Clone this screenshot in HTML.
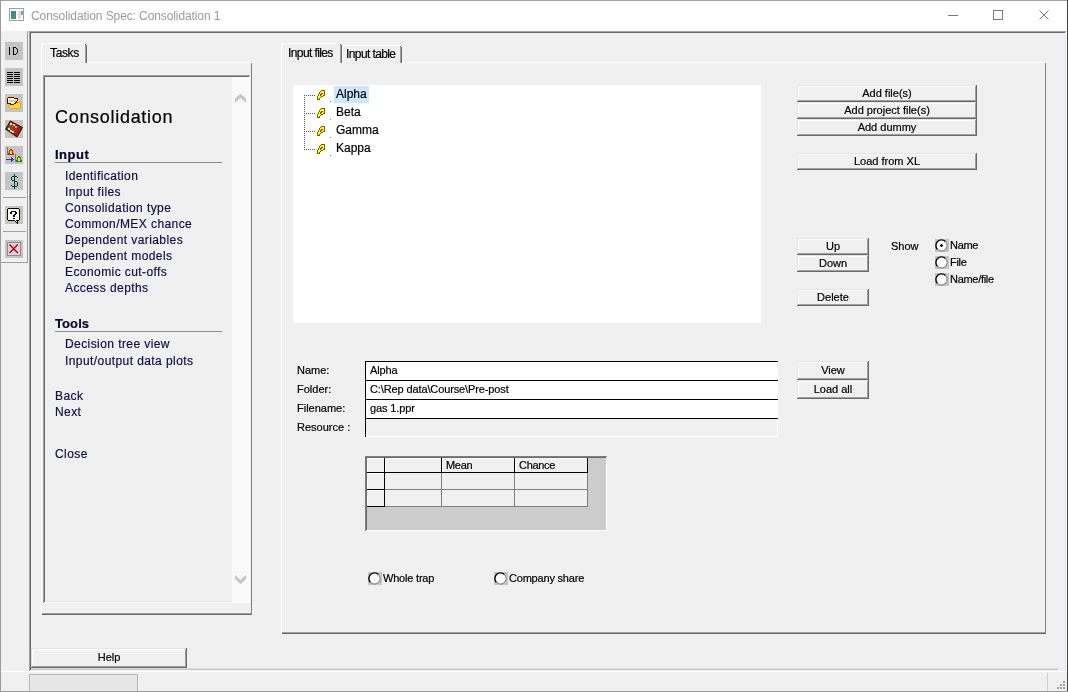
<!DOCTYPE html>
<html><head><meta charset="utf-8"><title>Consolidation Spec</title>
<style>
*{box-sizing:border-box;margin:0;padding:0}
html,body{width:1068px;height:692px;overflow:hidden;background:#f0f0f0}
body{position:relative;font-family:"Liberation Sans",sans-serif;color:#000}
div{position:absolute}
.a{position:absolute}
.t{white-space:pre;will-change:transform;-webkit-text-stroke:0.2px currentColor}
</style></head><body>
<div style="left:0px;top:0px;width:1068px;height:692px;background:#f0f0f0;"></div>
<div style="left:0px;top:0px;width:1068px;height:31px;background:#fff;"></div>
<div style="left:0px;top:0px;width:1068px;height:1px;background:#a3a3a3;"></div>
<div style="left:0px;top:0px;width:1px;height:692px;background:#9c9c9c;"></div>
<div style="left:1067px;top:0px;width:1px;height:692px;background:#3f4452;"></div>
<div style="left:0px;top:691px;width:1068px;height:1px;background:#9c9c9c;"></div>
<div style="left:9px;top:8px;width:15px;height:13px;background:#fff;border:1px solid #a0a0a0;"></div>
<div style="left:11px;top:11px;width:5px;height:8px;background:linear-gradient(160deg,#4a7a9a,#3c9a70);"></div>
<div style="left:18px;top:11px;width:3px;height:8px;background:#dcdcdc;"></div>
<div style="left:21px;top:11px;width:2px;height:4px;background:#7aa8a0;"></div>
<div class="t" style="left:31px;top:9.84px;font-size:12px;line-height:12px;color:#9a9a9a;letter-spacing:-0.1px;-webkit-text-stroke:0;">Consolidation Spec: Consolidation 1</div>
<div style="left:948px;top:15px;width:10px;height:1px;background:#7a7a7a;"></div>
<div style="left:993px;top:10px;width:10px;height:10px;border:1px solid #7a7a7a;"></div>
<svg class="a" style="left:1039px;top:10px" width="10" height="10"><path d="M0.5 0.5L9.5 9.5M9.5 0.5L0.5 9.5" stroke="#7a7a7a" stroke-width="1"/></svg>
<div style="left:27px;top:31px;width:1px;height:232px;background:#a0a0a0;"></div>
<div style="left:1px;top:262px;width:27px;height:1px;background:#a0a0a0;"></div>
<div style="left:5px;top:42px;width:18px;height:18px;background:#c4c4c4;"></div>
<div style="left:5px;top:68px;width:18px;height:18px;background:#c4c4c4;"></div>
<div style="left:5px;top:94px;width:18px;height:18px;background:#c4c4c4;"></div>
<div style="left:5px;top:120px;width:18px;height:18px;background:#c4c4c4;"></div>
<div style="left:5px;top:146px;width:18px;height:18px;background:#c4c4c4;"></div>
<div style="left:5px;top:172px;width:18px;height:18px;background:#c4c4c4;"></div>
<div style="left:3px;top:197px;width:23px;height:1px;background:#a0a0a0;"></div>
<div style="left:5px;top:206px;width:18px;height:18px;background:#c4c4c4;"></div>
<div style="left:3px;top:231px;width:23px;height:1px;background:#a0a0a0;"></div>
<div style="left:5px;top:240px;width:18px;height:18px;background:#c4c4c4;"></div>
<svg class="a" style="left:5px;top:42px" width="18" height="18" viewBox="0 0 18 18" shape-rendering="crispEdges"><rect x="4" y="5" width="1" height="1" fill="#000"/><rect x="8" y="5" width="1" height="1" fill="#000"/><rect x="9" y="5" width="1" height="1" fill="#000"/><rect x="10" y="5" width="1" height="1" fill="#000"/><rect x="4" y="6" width="1" height="1" fill="#000"/><rect x="8" y="6" width="1" height="1" fill="#000"/><rect x="11" y="6" width="1" height="1" fill="#000"/><rect x="4" y="7" width="1" height="1" fill="#000"/><rect x="8" y="7" width="1" height="1" fill="#000"/><rect x="12" y="7" width="1" height="1" fill="#000"/><rect x="4" y="8" width="1" height="1" fill="#000"/><rect x="8" y="8" width="1" height="1" fill="#000"/><rect x="12" y="8" width="1" height="1" fill="#000"/><rect x="4" y="9" width="1" height="1" fill="#000"/><rect x="8" y="9" width="1" height="1" fill="#000"/><rect x="12" y="9" width="1" height="1" fill="#000"/><rect x="4" y="10" width="1" height="1" fill="#000"/><rect x="8" y="10" width="1" height="1" fill="#000"/><rect x="12" y="10" width="1" height="1" fill="#000"/><rect x="4" y="11" width="1" height="1" fill="#000"/><rect x="8" y="11" width="1" height="1" fill="#000"/><rect x="11" y="11" width="1" height="1" fill="#000"/><rect x="4" y="12" width="1" height="1" fill="#000"/><rect x="8" y="12" width="1" height="1" fill="#000"/><rect x="9" y="12" width="1" height="1" fill="#000"/><rect x="10" y="12" width="1" height="1" fill="#000"/></svg>
<svg class="a" style="left:5px;top:68px" width="18" height="18" viewBox="0 0 18 18" shape-rendering="crispEdges"><rect x="2" y="4" width="6" height="1" fill="#000"/><rect x="9" y="4" width="6" height="1" fill="#000"/><rect x="2" y="6" width="6" height="1" fill="#000"/><rect x="9" y="6" width="6" height="1" fill="#000"/><rect x="2" y="8" width="6" height="1" fill="#000"/><rect x="9" y="8" width="6" height="1" fill="#000"/><rect x="2" y="10" width="6" height="1" fill="#000"/><rect x="9" y="10" width="6" height="1" fill="#000"/><rect x="2" y="12" width="6" height="1" fill="#000"/><rect x="9" y="12" width="6" height="1" fill="#000"/><rect x="2" y="14" width="6" height="1" fill="#000"/><rect x="9" y="14" width="6" height="1" fill="#000"/></svg>
<svg class="a" style="left:5px;top:94px" width="18" height="18" viewBox="0 0 18 18" shape-rendering="crispEdges"><rect x="3" y="3" width="1" height="1" fill="#6a0000"/><rect x="4" y="3" width="1" height="1" fill="#6a0000"/><rect x="5" y="3" width="1" height="1" fill="#6a0000"/><rect x="6" y="3" width="1" height="1" fill="#6a0000"/><rect x="7" y="3" width="1" height="1" fill="#6a0000"/><rect x="8" y="3" width="1" height="1" fill="#6a0000"/><rect x="2" y="4" width="1" height="1" fill="#6a0000"/><rect x="3" y="4" width="1" height="1" fill="#fff0d0"/><rect x="4" y="4" width="1" height="1" fill="#fff0d0"/><rect x="5" y="4" width="1" height="1" fill="#fff0d0"/><rect x="6" y="4" width="1" height="1" fill="#fff0d0"/><rect x="7" y="4" width="1" height="1" fill="#fff0d0"/><rect x="8" y="4" width="1" height="1" fill="#fff0d0"/><rect x="9" y="4" width="1" height="1" fill="#6a0000"/><rect x="10" y="4" width="1" height="1" fill="#6a0000"/><rect x="11" y="4" width="1" height="1" fill="#6a0000"/><rect x="12" y="4" width="1" height="1" fill="#6a0000"/><rect x="2" y="5" width="1" height="1" fill="#6a0000"/><rect x="3" y="5" width="1" height="1" fill="#fff0d0"/><rect x="4" y="5" width="1" height="1" fill="#fff0d0"/><rect x="5" y="5" width="1" height="1" fill="#fff0d0"/><rect x="6" y="5" width="1" height="1" fill="#fff0d0"/><rect x="7" y="5" width="1" height="1" fill="#fff0d0"/><rect x="8" y="5" width="1" height="1" fill="#fff0d0"/><rect x="9" y="5" width="1" height="1" fill="#fff0d0"/><rect x="10" y="5" width="1" height="1" fill="#fff0d0"/><rect x="11" y="5" width="1" height="1" fill="#fff0d0"/><rect x="12" y="5" width="1" height="1" fill="#6a0000"/><rect x="2" y="6" width="1" height="1" fill="#6a0000"/><rect x="3" y="6" width="1" height="1" fill="#fff0d0"/><rect x="4" y="6" width="1" height="1" fill="#c0dc90"/><rect x="5" y="6" width="1" height="1" fill="#c0dc90"/><rect x="6" y="6" width="1" height="1" fill="#c0dc90"/><rect x="7" y="6" width="1" height="1" fill="#c0dc90"/><rect x="8" y="6" width="1" height="1" fill="#c0dc90"/><rect x="9" y="6" width="1" height="1" fill="#c0dc90"/><rect x="10" y="6" width="1" height="1" fill="#c0dc90"/><rect x="11" y="6" width="1" height="1" fill="#fff0d0"/><rect x="12" y="6" width="1" height="1" fill="#6a0000"/><rect x="2" y="7" width="1" height="1" fill="#6a0000"/><rect x="3" y="7" width="1" height="1" fill="#fff0d0"/><rect x="4" y="7" width="1" height="1" fill="#c0dc90"/><rect x="5" y="7" width="1" height="1" fill="#c0dc90"/><rect x="6" y="7" width="1" height="1" fill="#c0dc90"/><rect x="7" y="7" width="1" height="1" fill="#c0dc90"/><rect x="8" y="7" width="1" height="1" fill="#c0dc90"/><rect x="9" y="7" width="1" height="1" fill="#c0dc90"/><rect x="10" y="7" width="1" height="1" fill="#c0dc90"/><rect x="11" y="7" width="1" height="1" fill="#6a0000"/><rect x="2" y="8" width="1" height="1" fill="#6a0000"/><rect x="3" y="8" width="1" height="1" fill="#fff0d0"/><rect x="4" y="8" width="1" height="1" fill="#fff0d0"/><rect x="5" y="8" width="1" height="1" fill="#fff0d0"/><rect x="6" y="8" width="1" height="1" fill="#fff0d0"/><rect x="7" y="8" width="1" height="1" fill="#fff0d0"/><rect x="8" y="8" width="1" height="1" fill="#fff0d0"/><rect x="9" y="8" width="1" height="1" fill="#fff0d0"/><rect x="10" y="8" width="1" height="1" fill="#6a0000"/><rect x="11" y="8" width="1" height="1" fill="#6a0000"/><rect x="12" y="8" width="1" height="1" fill="#f0a030"/><rect x="13" y="8" width="1" height="1" fill="#f0a030"/><rect x="14" y="8" width="1" height="1" fill="#f0a030"/><rect x="15" y="8" width="1" height="1" fill="#f0a030"/><rect x="2" y="9" width="1" height="1" fill="#6a0000"/><rect x="3" y="9" width="1" height="1" fill="#6a0000"/><rect x="4" y="9" width="1" height="1" fill="#6a0000"/><rect x="5" y="9" width="1" height="1" fill="#6a0000"/><rect x="6" y="9" width="1" height="1" fill="#fff0d0"/><rect x="7" y="9" width="1" height="1" fill="#fff0d0"/><rect x="8" y="9" width="1" height="1" fill="#fff0d0"/><rect x="9" y="9" width="1" height="1" fill="#6a0000"/><rect x="10" y="9" width="1" height="1" fill="#6a0000"/><rect x="11" y="9" width="1" height="1" fill="#ffe400"/><rect x="12" y="9" width="1" height="1" fill="#ffe400"/><rect x="13" y="9" width="1" height="1" fill="#ffe400"/><rect x="14" y="9" width="1" height="1" fill="#ffe400"/><rect x="15" y="9" width="1" height="1" fill="#f0a030"/><rect x="5" y="10" width="1" height="1" fill="#6a0000"/><rect x="6" y="10" width="1" height="1" fill="#6a0000"/><rect x="7" y="10" width="1" height="1" fill="#6a0000"/><rect x="8" y="10" width="1" height="1" fill="#6a0000"/><rect x="9" y="10" width="1" height="1" fill="#ffe400"/><rect x="10" y="10" width="1" height="1" fill="#ffe400"/><rect x="11" y="10" width="1" height="1" fill="#ffe400"/><rect x="12" y="10" width="1" height="1" fill="#ffe400"/><rect x="13" y="10" width="1" height="1" fill="#ffe400"/><rect x="14" y="10" width="1" height="1" fill="#ffe400"/><rect x="15" y="10" width="1" height="1" fill="#f0a030"/><rect x="3" y="11" width="1" height="1" fill="#f0a030"/><rect x="4" y="11" width="1" height="1" fill="#f0a030"/><rect x="5" y="11" width="1" height="1" fill="#ffe400"/><rect x="6" y="11" width="1" height="1" fill="#ffe400"/><rect x="7" y="11" width="1" height="1" fill="#ffe400"/><rect x="8" y="11" width="1" height="1" fill="#ffe400"/><rect x="9" y="11" width="1" height="1" fill="#ffe400"/><rect x="10" y="11" width="1" height="1" fill="#ffe400"/><rect x="11" y="11" width="1" height="1" fill="#ffe400"/><rect x="12" y="11" width="1" height="1" fill="#ffe400"/><rect x="13" y="11" width="1" height="1" fill="#ffe400"/><rect x="14" y="11" width="1" height="1" fill="#ffe400"/><rect x="15" y="11" width="1" height="1" fill="#f0a030"/><rect x="3" y="12" width="1" height="1" fill="#f0a030"/><rect x="4" y="12" width="1" height="1" fill="#ffe400"/><rect x="5" y="12" width="1" height="1" fill="#ffe400"/><rect x="6" y="12" width="1" height="1" fill="#ffe400"/><rect x="7" y="12" width="1" height="1" fill="#ffe400"/><rect x="8" y="12" width="1" height="1" fill="#ffe400"/><rect x="9" y="12" width="1" height="1" fill="#ffe400"/><rect x="10" y="12" width="1" height="1" fill="#ffe400"/><rect x="11" y="12" width="1" height="1" fill="#ffe400"/><rect x="12" y="12" width="1" height="1" fill="#ffe400"/><rect x="13" y="12" width="1" height="1" fill="#ffe400"/><rect x="14" y="12" width="1" height="1" fill="#ffe400"/><rect x="15" y="12" width="1" height="1" fill="#f0a030"/><rect x="4" y="13" width="1" height="1" fill="#f0a030"/><rect x="5" y="13" width="1" height="1" fill="#ffe400"/><rect x="6" y="13" width="1" height="1" fill="#ffe400"/><rect x="7" y="13" width="1" height="1" fill="#ffe400"/><rect x="8" y="13" width="1" height="1" fill="#ffe400"/><rect x="9" y="13" width="1" height="1" fill="#ffe400"/><rect x="10" y="13" width="1" height="1" fill="#ffe400"/><rect x="11" y="13" width="1" height="1" fill="#ffe400"/><rect x="12" y="13" width="1" height="1" fill="#ffe400"/><rect x="13" y="13" width="1" height="1" fill="#ffe400"/><rect x="14" y="13" width="1" height="1" fill="#ffe400"/><rect x="15" y="13" width="1" height="1" fill="#f0a030"/><rect x="5" y="14" width="1" height="1" fill="#f0a030"/><rect x="6" y="14" width="1" height="1" fill="#f0a030"/><rect x="7" y="14" width="1" height="1" fill="#f0a030"/><rect x="8" y="14" width="1" height="1" fill="#f0a030"/><rect x="9" y="14" width="1" height="1" fill="#f0a030"/><rect x="10" y="14" width="1" height="1" fill="#f0a030"/><rect x="11" y="14" width="1" height="1" fill="#f0a030"/><rect x="12" y="14" width="1" height="1" fill="#f0a030"/><rect x="13" y="14" width="1" height="1" fill="#f0a030"/><rect x="14" y="14" width="1" height="1" fill="#f0a030"/></svg>
<svg class="a" style="left:5px;top:120px" width="18" height="18" viewBox="0 0 18 18" shape-rendering="crispEdges"><defs><linearGradient id="gf" x1="0" y1="0" x2="1" y2="0"><stop offset="0" stop-color="#2a8a20"/><stop offset="0.45" stop-color="#b03010"/><stop offset="1" stop-color="#b00c08"/></linearGradient></defs><polygon points="0.8,9 5.5,1.2 17.2,7.5 12,16.8" fill="url(#gf)" stroke="#3a1808" stroke-width="1.3" stroke-linejoin="round" shape-rendering="geometricPrecision"/><g fill="#f4d8c0"><rect x="5" y="3" width="2" height="2"/><rect x="7.5" y="4" width="2" height="2"/><rect x="2.5" y="8" width="2" height="2" fill="#c8e8b0"/><rect x="4.5" y="9.5" width="2" height="2"/><rect x="7" y="11" width="2" height="2"/></g><rect x="10" y="5.5" width="2" height="2" fill="#ff9090"/></svg>
<svg class="a" style="left:5px;top:146px" width="18" height="18" viewBox="0 0 18 18" shape-rendering="crispEdges"><rect x="2" y="1" width="1" height="1" fill="#7a7a7a"/><rect x="2" y="2" width="1" height="1" fill="#7a7a7a"/><rect x="2" y="3" width="1" height="1" fill="#7a7a7a"/><rect x="5" y="3" width="1" height="1" fill="#c02800"/><rect x="6" y="3" width="1" height="1" fill="#c02800"/><rect x="2" y="4" width="1" height="1" fill="#7a7a7a"/><rect x="4" y="4" width="1" height="1" fill="#c02800"/><rect x="5" y="4" width="1" height="1" fill="#e86000"/><rect x="6" y="4" width="1" height="1" fill="#e86000"/><rect x="7" y="4" width="1" height="1" fill="#c02800"/><rect x="2" y="5" width="1" height="1" fill="#7a7a7a"/><rect x="3" y="5" width="1" height="1" fill="#ff9898"/><rect x="4" y="5" width="1" height="1" fill="#c02800"/><rect x="5" y="5" width="1" height="1" fill="#fff030"/><rect x="6" y="5" width="1" height="1" fill="#fff030"/><rect x="7" y="5" width="1" height="1" fill="#c02800"/><rect x="8" y="5" width="1" height="1" fill="#ff9898"/><rect x="2" y="6" width="1" height="1" fill="#7a7a7a"/><rect x="3" y="6" width="1" height="1" fill="#ff9898"/><rect x="4" y="6" width="1" height="1" fill="#c02800"/><rect x="5" y="6" width="1" height="1" fill="#fff030"/><rect x="6" y="6" width="1" height="1" fill="#fff030"/><rect x="7" y="6" width="1" height="1" fill="#c02800"/><rect x="8" y="6" width="1" height="1" fill="#ff9898"/><rect x="2" y="7" width="1" height="1" fill="#7a7a7a"/><rect x="3" y="7" width="1" height="1" fill="#c02800"/><rect x="4" y="7" width="1" height="1" fill="#c02800"/><rect x="5" y="7" width="1" height="1" fill="#fff030"/><rect x="6" y="7" width="1" height="1" fill="#fff030"/><rect x="7" y="7" width="1" height="1" fill="#c02800"/><rect x="8" y="7" width="1" height="1" fill="#c02800"/><rect x="2" y="8" width="1" height="1" fill="#7a7a7a"/><rect x="3" y="8" width="1" height="1" fill="#c02800"/><rect x="4" y="8" width="1" height="1" fill="#c02800"/><rect x="5" y="8" width="1" height="1" fill="#c02800"/><rect x="6" y="8" width="1" height="1" fill="#c02800"/><rect x="7" y="8" width="1" height="1" fill="#c02800"/><rect x="8" y="8" width="1" height="1" fill="#c02800"/><rect x="10" y="8" width="1" height="1" fill="#7a7a7a"/><rect x="10" y="9" width="1" height="1" fill="#7a7a7a"/><rect x="10" y="10" width="1" height="1" fill="#7a7a7a"/><rect x="13" y="10" width="1" height="1" fill="#1a8a1a"/><rect x="14" y="10" width="1" height="1" fill="#1a8a1a"/><rect x="6" y="11" width="1" height="1" fill="#3040b0"/><rect x="10" y="11" width="1" height="1" fill="#7a7a7a"/><rect x="12" y="11" width="1" height="1" fill="#1a8a1a"/><rect x="13" y="11" width="1" height="1" fill="#e86000"/><rect x="14" y="11" width="1" height="1" fill="#e86000"/><rect x="15" y="11" width="1" height="1" fill="#1a8a1a"/><rect x="6" y="12" width="1" height="1" fill="#3040b0"/><rect x="7" y="12" width="1" height="1" fill="#3040b0"/><rect x="10" y="12" width="1" height="1" fill="#7a7a7a"/><rect x="11" y="12" width="1" height="1" fill="#90e090"/><rect x="12" y="12" width="1" height="1" fill="#1a8a1a"/><rect x="13" y="12" width="1" height="1" fill="#fff030"/><rect x="14" y="12" width="1" height="1" fill="#fff030"/><rect x="15" y="12" width="1" height="1" fill="#1a8a1a"/><rect x="16" y="12" width="1" height="1" fill="#90e090"/><rect x="1" y="13" width="1" height="1" fill="#3040b0"/><rect x="2" y="13" width="1" height="1" fill="#3040b0"/><rect x="3" y="13" width="1" height="1" fill="#3040b0"/><rect x="4" y="13" width="1" height="1" fill="#3040b0"/><rect x="5" y="13" width="1" height="1" fill="#3040b0"/><rect x="6" y="13" width="1" height="1" fill="#3040b0"/><rect x="7" y="13" width="1" height="1" fill="#3040b0"/><rect x="8" y="13" width="1" height="1" fill="#3040b0"/><rect x="10" y="13" width="1" height="1" fill="#7a7a7a"/><rect x="11" y="13" width="1" height="1" fill="#90e090"/><rect x="12" y="13" width="1" height="1" fill="#1a8a1a"/><rect x="13" y="13" width="1" height="1" fill="#fff030"/><rect x="14" y="13" width="1" height="1" fill="#fff030"/><rect x="15" y="13" width="1" height="1" fill="#1a8a1a"/><rect x="16" y="13" width="1" height="1" fill="#90e090"/><rect x="6" y="14" width="1" height="1" fill="#3040b0"/><rect x="7" y="14" width="1" height="1" fill="#3040b0"/><rect x="10" y="14" width="1" height="1" fill="#7a7a7a"/><rect x="11" y="14" width="1" height="1" fill="#1a8a1a"/><rect x="12" y="14" width="1" height="1" fill="#1a8a1a"/><rect x="13" y="14" width="1" height="1" fill="#fff030"/><rect x="14" y="14" width="1" height="1" fill="#fff030"/><rect x="15" y="14" width="1" height="1" fill="#1a8a1a"/><rect x="16" y="14" width="1" height="1" fill="#1a8a1a"/><rect x="6" y="15" width="1" height="1" fill="#3040b0"/><rect x="10" y="15" width="1" height="1" fill="#7a7a7a"/><rect x="11" y="15" width="1" height="1" fill="#1a8a1a"/><rect x="12" y="15" width="1" height="1" fill="#1a8a1a"/><rect x="13" y="15" width="1" height="1" fill="#1a8a1a"/><rect x="14" y="15" width="1" height="1" fill="#1a8a1a"/><rect x="15" y="15" width="1" height="1" fill="#1a8a1a"/><rect x="16" y="15" width="1" height="1" fill="#1a8a1a"/></svg>
<svg class="a" style="left:5px;top:172px" width="18" height="18" viewBox="0 0 18 18" shape-rendering="crispEdges"><rect x="9" y="2" width="1" height="1" fill="#003c3c"/><rect x="9" y="3" width="1" height="1" fill="#003c3c"/><rect x="7" y="4" width="1" height="1" fill="#003c3c"/><rect x="8" y="4" width="1" height="1" fill="#003c3c"/><rect x="9" y="4" width="1" height="1" fill="#003c3c"/><rect x="10" y="4" width="1" height="1" fill="#003c3c"/><rect x="11" y="4" width="1" height="1" fill="#003c3c"/><rect x="6" y="5" width="1" height="1" fill="#003c3c"/><rect x="9" y="5" width="1" height="1" fill="#003c3c"/><rect x="12" y="5" width="1" height="1" fill="#003c3c"/><rect x="6" y="6" width="1" height="1" fill="#003c3c"/><rect x="9" y="6" width="1" height="1" fill="#003c3c"/><rect x="6" y="7" width="1" height="1" fill="#003c3c"/><rect x="9" y="7" width="1" height="1" fill="#003c3c"/><rect x="7" y="8" width="1" height="1" fill="#003c3c"/><rect x="8" y="8" width="1" height="1" fill="#003c3c"/><rect x="9" y="8" width="1" height="1" fill="#003c3c"/><rect x="9" y="9" width="1" height="1" fill="#003c3c"/><rect x="10" y="9" width="1" height="1" fill="#003c3c"/><rect x="11" y="9" width="1" height="1" fill="#003c3c"/><rect x="9" y="10" width="1" height="1" fill="#003c3c"/><rect x="12" y="10" width="1" height="1" fill="#003c3c"/><rect x="9" y="11" width="1" height="1" fill="#003c3c"/><rect x="12" y="11" width="1" height="1" fill="#003c3c"/><rect x="9" y="12" width="1" height="1" fill="#003c3c"/><rect x="12" y="12" width="1" height="1" fill="#003c3c"/><rect x="6" y="13" width="1" height="1" fill="#003c3c"/><rect x="9" y="13" width="1" height="1" fill="#003c3c"/><rect x="12" y="13" width="1" height="1" fill="#003c3c"/><rect x="7" y="14" width="1" height="1" fill="#003c3c"/><rect x="8" y="14" width="1" height="1" fill="#003c3c"/><rect x="9" y="14" width="1" height="1" fill="#003c3c"/><rect x="10" y="14" width="1" height="1" fill="#003c3c"/><rect x="11" y="14" width="1" height="1" fill="#003c3c"/><rect x="9" y="15" width="1" height="1" fill="#003c3c"/><rect x="9" y="16" width="1" height="1" fill="#003c3c"/></svg>
<svg class="a" style="left:5px;top:206px" width="18" height="18" viewBox="0 0 18 18" shape-rendering="crispEdges"><rect x="3" y="2" width="1" height="1" fill="#000"/><rect x="4" y="2" width="1" height="1" fill="#000"/><rect x="5" y="2" width="1" height="1" fill="#000"/><rect x="6" y="2" width="1" height="1" fill="#000"/><rect x="7" y="2" width="1" height="1" fill="#000"/><rect x="8" y="2" width="1" height="1" fill="#000"/><rect x="9" y="2" width="1" height="1" fill="#000"/><rect x="10" y="2" width="1" height="1" fill="#000"/><rect x="11" y="2" width="1" height="1" fill="#000"/><rect x="12" y="2" width="1" height="1" fill="#000"/><rect x="13" y="2" width="1" height="1" fill="#000"/><rect x="2" y="3" width="1" height="1" fill="#000"/><rect x="3" y="3" width="1" height="1" fill="#ffffe0"/><rect x="4" y="3" width="1" height="1" fill="#ffffe0"/><rect x="5" y="3" width="1" height="1" fill="#ffffe0"/><rect x="6" y="3" width="1" height="1" fill="#ffffe0"/><rect x="7" y="3" width="1" height="1" fill="#ffffe0"/><rect x="8" y="3" width="1" height="1" fill="#ffffe0"/><rect x="9" y="3" width="1" height="1" fill="#ffffe0"/><rect x="10" y="3" width="1" height="1" fill="#ffffe0"/><rect x="11" y="3" width="1" height="1" fill="#ffffe0"/><rect x="12" y="3" width="1" height="1" fill="#ffffe0"/><rect x="13" y="3" width="1" height="1" fill="#ffffe0"/><rect x="14" y="3" width="1" height="1" fill="#000"/><rect x="2" y="4" width="1" height="1" fill="#000"/><rect x="3" y="4" width="1" height="1" fill="#ffffe0"/><rect x="4" y="4" width="1" height="1" fill="#ffffe0"/><rect x="5" y="4" width="1" height="1" fill="#ffffe0"/><rect x="6" y="4" width="1" height="1" fill="#ffffe0"/><rect x="7" y="4" width="1" height="1" fill="#ffffe0"/><rect x="8" y="4" width="1" height="1" fill="#ffffe0"/><rect x="9" y="4" width="1" height="1" fill="#ffffe0"/><rect x="10" y="4" width="1" height="1" fill="#ffffe0"/><rect x="11" y="4" width="1" height="1" fill="#ffffe0"/><rect x="12" y="4" width="1" height="1" fill="#ffffe0"/><rect x="13" y="4" width="1" height="1" fill="#ffffe0"/><rect x="14" y="4" width="1" height="1" fill="#000"/><rect x="2" y="5" width="1" height="1" fill="#000"/><rect x="3" y="5" width="1" height="1" fill="#ffffe0"/><rect x="4" y="5" width="1" height="1" fill="#ffffe0"/><rect x="5" y="5" width="1" height="1" fill="#ffffe0"/><rect x="6" y="5" width="1" height="1" fill="#000050"/><rect x="7" y="5" width="1" height="1" fill="#000050"/><rect x="8" y="5" width="1" height="1" fill="#000050"/><rect x="9" y="5" width="1" height="1" fill="#000050"/><rect x="10" y="5" width="1" height="1" fill="#000050"/><rect x="11" y="5" width="1" height="1" fill="#ffffe0"/><rect x="12" y="5" width="1" height="1" fill="#ffffe0"/><rect x="13" y="5" width="1" height="1" fill="#ffffe0"/><rect x="14" y="5" width="1" height="1" fill="#000"/><rect x="2" y="6" width="1" height="1" fill="#000"/><rect x="3" y="6" width="1" height="1" fill="#ffffe0"/><rect x="4" y="6" width="1" height="1" fill="#ffffe0"/><rect x="5" y="6" width="1" height="1" fill="#000050"/><rect x="6" y="6" width="1" height="1" fill="#000050"/><rect x="7" y="6" width="1" height="1" fill="#ffffe0"/><rect x="8" y="6" width="1" height="1" fill="#ffffe0"/><rect x="9" y="6" width="1" height="1" fill="#ffffe0"/><rect x="10" y="6" width="1" height="1" fill="#000050"/><rect x="11" y="6" width="1" height="1" fill="#000050"/><rect x="12" y="6" width="1" height="1" fill="#ffffe0"/><rect x="13" y="6" width="1" height="1" fill="#ffffe0"/><rect x="14" y="6" width="1" height="1" fill="#000"/><rect x="2" y="7" width="1" height="1" fill="#000"/><rect x="3" y="7" width="1" height="1" fill="#ffffe0"/><rect x="4" y="7" width="1" height="1" fill="#ffffe0"/><rect x="5" y="7" width="1" height="1" fill="#000050"/><rect x="6" y="7" width="1" height="1" fill="#000050"/><rect x="7" y="7" width="1" height="1" fill="#ffffe0"/><rect x="8" y="7" width="1" height="1" fill="#ffffe0"/><rect x="9" y="7" width="1" height="1" fill="#ffffe0"/><rect x="10" y="7" width="1" height="1" fill="#000050"/><rect x="11" y="7" width="1" height="1" fill="#000050"/><rect x="12" y="7" width="1" height="1" fill="#ffffe0"/><rect x="13" y="7" width="1" height="1" fill="#ffffe0"/><rect x="14" y="7" width="1" height="1" fill="#000"/><rect x="2" y="8" width="1" height="1" fill="#000"/><rect x="3" y="8" width="1" height="1" fill="#ffffe0"/><rect x="4" y="8" width="1" height="1" fill="#ffffe0"/><rect x="5" y="8" width="1" height="1" fill="#ffffe0"/><rect x="6" y="8" width="1" height="1" fill="#ffffe0"/><rect x="7" y="8" width="1" height="1" fill="#ffffe0"/><rect x="8" y="8" width="1" height="1" fill="#ffffe0"/><rect x="9" y="8" width="1" height="1" fill="#000050"/><rect x="10" y="8" width="1" height="1" fill="#000050"/><rect x="11" y="8" width="1" height="1" fill="#ffffe0"/><rect x="12" y="8" width="1" height="1" fill="#ffffe0"/><rect x="13" y="8" width="1" height="1" fill="#ffffe0"/><rect x="14" y="8" width="1" height="1" fill="#000"/><rect x="2" y="9" width="1" height="1" fill="#000"/><rect x="3" y="9" width="1" height="1" fill="#ffffe0"/><rect x="4" y="9" width="1" height="1" fill="#ffffe0"/><rect x="5" y="9" width="1" height="1" fill="#ffffe0"/><rect x="6" y="9" width="1" height="1" fill="#ffffe0"/><rect x="7" y="9" width="1" height="1" fill="#ffffe0"/><rect x="8" y="9" width="1" height="1" fill="#000050"/><rect x="9" y="9" width="1" height="1" fill="#000050"/><rect x="10" y="9" width="1" height="1" fill="#ffffe0"/><rect x="11" y="9" width="1" height="1" fill="#ffffe0"/><rect x="12" y="9" width="1" height="1" fill="#ffffe0"/><rect x="13" y="9" width="1" height="1" fill="#ffffe0"/><rect x="14" y="9" width="1" height="1" fill="#000"/><rect x="2" y="10" width="1" height="1" fill="#000"/><rect x="3" y="10" width="1" height="1" fill="#ffffe0"/><rect x="4" y="10" width="1" height="1" fill="#ffffe0"/><rect x="5" y="10" width="1" height="1" fill="#ffffe0"/><rect x="6" y="10" width="1" height="1" fill="#ffffe0"/><rect x="7" y="10" width="1" height="1" fill="#ffffe0"/><rect x="8" y="10" width="1" height="1" fill="#000050"/><rect x="9" y="10" width="1" height="1" fill="#000050"/><rect x="10" y="10" width="1" height="1" fill="#ffffe0"/><rect x="11" y="10" width="1" height="1" fill="#ffffe0"/><rect x="12" y="10" width="1" height="1" fill="#ffffe0"/><rect x="13" y="10" width="1" height="1" fill="#ffffe0"/><rect x="14" y="10" width="1" height="1" fill="#000"/><rect x="2" y="11" width="1" height="1" fill="#000"/><rect x="3" y="11" width="1" height="1" fill="#ffffe0"/><rect x="4" y="11" width="1" height="1" fill="#ffffe0"/><rect x="5" y="11" width="1" height="1" fill="#ffffe0"/><rect x="6" y="11" width="1" height="1" fill="#ffffe0"/><rect x="7" y="11" width="1" height="1" fill="#ffffe0"/><rect x="8" y="11" width="1" height="1" fill="#ffffe0"/><rect x="9" y="11" width="1" height="1" fill="#ffffe0"/><rect x="10" y="11" width="1" height="1" fill="#ffffe0"/><rect x="11" y="11" width="1" height="1" fill="#ffffe0"/><rect x="12" y="11" width="1" height="1" fill="#ffffe0"/><rect x="13" y="11" width="1" height="1" fill="#ffffe0"/><rect x="14" y="11" width="1" height="1" fill="#000"/><rect x="2" y="12" width="1" height="1" fill="#000"/><rect x="3" y="12" width="1" height="1" fill="#ffffe0"/><rect x="4" y="12" width="1" height="1" fill="#ffffe0"/><rect x="5" y="12" width="1" height="1" fill="#ffffe0"/><rect x="6" y="12" width="1" height="1" fill="#ffffe0"/><rect x="7" y="12" width="1" height="1" fill="#ffffe0"/><rect x="8" y="12" width="1" height="1" fill="#000050"/><rect x="9" y="12" width="1" height="1" fill="#000050"/><rect x="10" y="12" width="1" height="1" fill="#ffffe0"/><rect x="11" y="12" width="1" height="1" fill="#ffffe0"/><rect x="12" y="12" width="1" height="1" fill="#ffffe0"/><rect x="13" y="12" width="1" height="1" fill="#ffffe0"/><rect x="14" y="12" width="1" height="1" fill="#000"/><rect x="2" y="13" width="1" height="1" fill="#000"/><rect x="3" y="13" width="1" height="1" fill="#ffffe0"/><rect x="4" y="13" width="1" height="1" fill="#ffffe0"/><rect x="5" y="13" width="1" height="1" fill="#ffffe0"/><rect x="6" y="13" width="1" height="1" fill="#ffffe0"/><rect x="7" y="13" width="1" height="1" fill="#ffffe0"/><rect x="8" y="13" width="1" height="1" fill="#ffffe0"/><rect x="9" y="13" width="1" height="1" fill="#ffffe0"/><rect x="10" y="13" width="1" height="1" fill="#ffffe0"/><rect x="11" y="13" width="1" height="1" fill="#ffffe0"/><rect x="12" y="13" width="1" height="1" fill="#ffffe0"/><rect x="13" y="13" width="1" height="1" fill="#ffffe0"/><rect x="14" y="13" width="1" height="1" fill="#000"/><rect x="3" y="14" width="1" height="1" fill="#000"/><rect x="4" y="14" width="1" height="1" fill="#000"/><rect x="5" y="14" width="1" height="1" fill="#000"/><rect x="6" y="14" width="1" height="1" fill="#000"/><rect x="7" y="14" width="1" height="1" fill="#000"/><rect x="8" y="14" width="1" height="1" fill="#000"/><rect x="9" y="14" width="1" height="1" fill="#000"/><rect x="10" y="14" width="1" height="1" fill="#ffffe0"/><rect x="11" y="14" width="1" height="1" fill="#000"/><rect x="12" y="14" width="1" height="1" fill="#000"/><rect x="13" y="14" width="1" height="1" fill="#000"/><rect x="10" y="15" width="1" height="1" fill="#000"/><rect x="11" y="15" width="1" height="1" fill="#ffffe0"/><rect x="12" y="15" width="1" height="1" fill="#000"/><rect x="11" y="16" width="1" height="1" fill="#000"/><rect x="12" y="16" width="1" height="1" fill="#000"/><rect x="12" y="17" width="1" height="1" fill="#000"/></svg>
<svg class="a" style="left:5px;top:240px" width="18" height="18" viewBox="0 0 18 18" shape-rendering="crispEdges"><rect x="2.5" y="2.5" width="13" height="13" fill="#d6d6d6" stroke="#8c8c8c" stroke-width="1.2"/><path d="M4.5 4.5L12.8 13M12.8 4.5L4.5 13" stroke="#c80010" stroke-width="1.5" shape-rendering="geometricPrecision"/></svg>
<div style="left:29px;top:31px;width:1038px;height:1px;background:#a0a0a0;"></div>
<div style="left:29px;top:31px;width:1px;height:640px;background:#a0a0a0;"></div>
<div style="left:30px;top:32px;width:1036px;height:1px;background:#696969;"></div>
<div style="left:30px;top:32px;width:1px;height:638px;background:#696969;"></div>
<div style="left:1066px;top:31px;width:1px;height:640px;background:#fff;"></div>
<div style="left:1px;top:671px;width:1066px;height:1px;background:#fff;"></div>
<div style="left:1065px;top:32px;width:1px;height:638px;background:#e3e3e3;"></div>
<div style="left:31px;top:668px;width:1027px;height:1px;background:#dadada;"></div>
<div style="left:31px;top:669px;width:1027px;height:1px;background:#c8c8c8;"></div>
<div style="left:41px;top:62px;width:211px;height:553px;box-shadow:inset 1px 1px #fff,inset -1px 0 #808080,inset 0 -1px #696969,inset 0 -2px #a0a0a0;"></div>
<div style="left:41px;top:43px;width:46px;height:20px;background:#f0f0f0;box-shadow:inset 1px 1px #fff,inset -1px 0 #696969,inset -2px 0 #a0a0a0;"></div>
<div style="left:41px;top:43px;width:1px;height:1px;background:#f0f0f0;"></div>
<div style="left:85px;top:43px;width:2px;height:1px;background:#f0f0f0;"></div>
<div style="left:86px;top:44px;width:1px;height:1px;background:#f0f0f0;"></div>
<div style="left:85px;top:44px;width:1px;height:1px;background:#696969;"></div>
<div class="t" style="left:50px;top:46.84px;font-size:12px;line-height:12px;color:#000;letter-spacing:-0.35px;">Tasks</div>
<div style="left:43px;top:75px;width:207px;height:528px;background:#f0f0f0;box-shadow:inset 1px 1px #a0a0a0,inset -1px -1px #fff,inset 2px 2px #696969,inset -2px -2px #e3e3e3;"></div>
<div style="left:232px;top:77px;width:17px;height:525px;background:#f9f9f9;"></div>
<svg class="a" style="left:230px;top:88px" width="20" height="20"><polygon points="5,10.8 10.5,5.8 16,10.8 16,14.8 10.5,9.8 5,14.8" fill="#c4c4c4"/></svg>
<svg class="a" style="left:230px;top:568px" width="20" height="20"><polygon points="5,7 10.5,12 16,7 16,11 10.5,16 5,11" fill="#c4c4c4"/></svg>
<div class="t" style="left:55px;top:107.76px;font-size:18px;line-height:18px;color:#000;letter-spacing:0.7px;">Consolidation</div>
<div class="t" style="left:55px;top:148.00px;font-size:13px;line-height:13px;color:#000033;font-weight:bold;letter-spacing:0.5px;">Input</div>
<div style="left:55px;top:162px;width:167px;height:1px;background:#8c8c8c;"></div>
<div class="t" style="left:65px;top:169.84px;font-size:12px;line-height:12px;color:#10104a;letter-spacing:0.42px;">Identification</div>
<div class="t" style="left:65px;top:185.84px;font-size:12px;line-height:12px;color:#10104a;letter-spacing:0.42px;">Input files</div>
<div class="t" style="left:65px;top:201.84px;font-size:12px;line-height:12px;color:#10104a;letter-spacing:0.42px;">Consolidation type</div>
<div class="t" style="left:65px;top:217.84px;font-size:12px;line-height:12px;color:#10104a;letter-spacing:0.42px;">Common/MEX chance</div>
<div class="t" style="left:65px;top:233.84px;font-size:12px;line-height:12px;color:#10104a;letter-spacing:0.42px;">Dependent variables</div>
<div class="t" style="left:65px;top:249.84px;font-size:12px;line-height:12px;color:#10104a;letter-spacing:0.42px;">Dependent models</div>
<div class="t" style="left:65px;top:265.84px;font-size:12px;line-height:12px;color:#10104a;letter-spacing:0.42px;">Economic cut-offs</div>
<div class="t" style="left:65px;top:281.84px;font-size:12px;line-height:12px;color:#10104a;letter-spacing:0.42px;">Access depths</div>
<div class="t" style="left:55px;top:317.00px;font-size:13px;line-height:13px;color:#000033;font-weight:bold;letter-spacing:0.1px;">Tools</div>
<div style="left:55px;top:331px;width:167px;height:1px;background:#8c8c8c;"></div>
<div class="t" style="left:65px;top:337.84px;font-size:12px;line-height:12px;color:#10104a;letter-spacing:0.42px;">Decision tree view</div>
<div class="t" style="left:65px;top:354.84px;font-size:12px;line-height:12px;color:#10104a;letter-spacing:0.42px;">Input/output data plots</div>
<div class="t" style="left:55px;top:389.84px;font-size:12px;line-height:12px;color:#10104a;letter-spacing:0.42px;">Back</div>
<div class="t" style="left:55px;top:405.84px;font-size:12px;line-height:12px;color:#10104a;letter-spacing:0.42px;">Next</div>
<div class="t" style="left:55px;top:447.84px;font-size:12px;line-height:12px;color:#10104a;letter-spacing:0.42px;">Close</div>
<div style="left:281px;top:62px;width:765px;height:572px;box-shadow:inset 1px 1px #fff,inset -1px 0 #808080,inset 0 -1px #696969,inset 0 -2px #a0a0a0;"></div>
<div style="left:342px;top:45px;width:60px;height:18px;background:#f0f0f0;box-shadow:inset 1px 1px #fff,inset -1px 0 #696969,inset -2px 0 #a0a0a0;"></div>
<div style="left:342px;top:45px;width:1px;height:1px;background:#f0f0f0;"></div>
<div style="left:400px;top:45px;width:2px;height:1px;background:#f0f0f0;"></div>
<div style="left:401px;top:46px;width:1px;height:1px;background:#f0f0f0;"></div>
<div style="left:400px;top:46px;width:1px;height:1px;background:#696969;"></div>
<div class="t" style="left:346px;top:47.84px;font-size:12px;line-height:12px;color:#000;letter-spacing:-0.6px;">Input table</div>
<div style="left:281px;top:43px;width:61px;height:20px;background:#f0f0f0;box-shadow:inset 1px 1px #fff,inset -1px 0 #696969,inset -2px 0 #a0a0a0;"></div>
<div style="left:281px;top:43px;width:1px;height:1px;background:#f0f0f0;"></div>
<div style="left:340px;top:43px;width:2px;height:1px;background:#f0f0f0;"></div>
<div style="left:341px;top:44px;width:1px;height:1px;background:#f0f0f0;"></div>
<div style="left:340px;top:44px;width:1px;height:1px;background:#696969;"></div>
<div class="t" style="left:288px;top:46.84px;font-size:12px;line-height:12px;color:#000;letter-spacing:-0.6px;">Input files</div>
<div style="left:293px;top:85px;width:468px;height:238px;background:#fff;"></div>
<svg class="a" style="left:293px;top:85px" width="60" height="80" viewBox="0 0 60 80" shape-rendering="crispEdges"><rect x="11" y="10" width="1" height="1" fill="#555"/><rect x="11" y="12" width="1" height="1" fill="#555"/><rect x="11" y="14" width="1" height="1" fill="#555"/><rect x="11" y="16" width="1" height="1" fill="#555"/><rect x="11" y="18" width="1" height="1" fill="#555"/><rect x="11" y="20" width="1" height="1" fill="#555"/><rect x="11" y="22" width="1" height="1" fill="#555"/><rect x="11" y="24" width="1" height="1" fill="#555"/><rect x="11" y="26" width="1" height="1" fill="#555"/><rect x="11" y="28" width="1" height="1" fill="#555"/><rect x="11" y="30" width="1" height="1" fill="#555"/><rect x="11" y="32" width="1" height="1" fill="#555"/><rect x="11" y="34" width="1" height="1" fill="#555"/><rect x="11" y="36" width="1" height="1" fill="#555"/><rect x="11" y="38" width="1" height="1" fill="#555"/><rect x="11" y="40" width="1" height="1" fill="#555"/><rect x="11" y="42" width="1" height="1" fill="#555"/><rect x="11" y="44" width="1" height="1" fill="#555"/><rect x="11" y="46" width="1" height="1" fill="#555"/><rect x="11" y="48" width="1" height="1" fill="#555"/><rect x="11" y="50" width="1" height="1" fill="#555"/><rect x="11" y="52" width="1" height="1" fill="#555"/><rect x="11" y="54" width="1" height="1" fill="#555"/><rect x="11" y="56" width="1" height="1" fill="#555"/><rect x="11" y="58" width="1" height="1" fill="#555"/><rect x="11" y="60" width="1" height="1" fill="#555"/><rect x="11" y="62" width="1" height="1" fill="#555"/><rect x="11" y="64" width="1" height="1" fill="#555"/><rect x="11" y="10" width="1" height="1" fill="#555"/><rect x="13" y="10" width="1" height="1" fill="#555"/><rect x="15" y="10" width="1" height="1" fill="#555"/><rect x="17" y="10" width="1" height="1" fill="#555"/><rect x="19" y="10" width="1" height="1" fill="#555"/><rect x="21" y="10" width="1" height="1" fill="#555"/><rect x="11" y="28" width="1" height="1" fill="#555"/><rect x="13" y="28" width="1" height="1" fill="#555"/><rect x="15" y="28" width="1" height="1" fill="#555"/><rect x="17" y="28" width="1" height="1" fill="#555"/><rect x="19" y="28" width="1" height="1" fill="#555"/><rect x="21" y="28" width="1" height="1" fill="#555"/><rect x="11" y="46" width="1" height="1" fill="#555"/><rect x="13" y="46" width="1" height="1" fill="#555"/><rect x="15" y="46" width="1" height="1" fill="#555"/><rect x="17" y="46" width="1" height="1" fill="#555"/><rect x="19" y="46" width="1" height="1" fill="#555"/><rect x="21" y="46" width="1" height="1" fill="#555"/><rect x="11" y="64" width="1" height="1" fill="#555"/><rect x="13" y="64" width="1" height="1" fill="#555"/><rect x="15" y="64" width="1" height="1" fill="#555"/><rect x="17" y="64" width="1" height="1" fill="#555"/><rect x="19" y="64" width="1" height="1" fill="#555"/><rect x="21" y="64" width="1" height="1" fill="#555"/></svg>
<svg class="a" style="left:317px;top:90px" width="9" height="10" viewBox="0 0 9 10" shape-rendering="crispEdges"><rect x="4" y="0" width="1" height="1" fill="#6a6a00"/><rect x="5" y="0" width="1" height="1" fill="#6a6a00"/><rect x="6" y="0" width="1" height="1" fill="#6a6a00"/><rect x="7" y="0" width="1" height="1" fill="#6a6a00"/><rect x="3" y="1" width="1" height="1" fill="#6a6a00"/><rect x="4" y="1" width="1" height="1" fill="#ffff30"/><rect x="5" y="1" width="1" height="1" fill="#ffff30"/><rect x="6" y="1" width="1" height="1" fill="#ffff30"/><rect x="7" y="1" width="1" height="1" fill="#6a6a00"/><rect x="2" y="2" width="1" height="1" fill="#6a6a00"/><rect x="3" y="2" width="1" height="1" fill="#ffff30"/><rect x="4" y="2" width="1" height="1" fill="#ffff30"/><rect x="5" y="2" width="1" height="1" fill="#ffff30"/><rect x="6" y="2" width="1" height="1" fill="#ffff30"/><rect x="7" y="2" width="1" height="1" fill="#6a6a00"/><rect x="2" y="3" width="1" height="1" fill="#6a6a00"/><rect x="3" y="3" width="1" height="1" fill="#ffff30"/><rect x="4" y="3" width="1" height="1" fill="#d02800"/><rect x="5" y="3" width="1" height="1" fill="#d02800"/><rect x="6" y="3" width="1" height="1" fill="#ffff30"/><rect x="7" y="3" width="1" height="1" fill="#6a6a00"/><rect x="1" y="4" width="1" height="1" fill="#6a6a00"/><rect x="2" y="4" width="1" height="1" fill="#ffff30"/><rect x="3" y="4" width="1" height="1" fill="#d02800"/><rect x="4" y="4" width="1" height="1" fill="#d02800"/><rect x="5" y="4" width="1" height="1" fill="#ffff30"/><rect x="6" y="4" width="1" height="1" fill="#ffff30"/><rect x="7" y="4" width="1" height="1" fill="#6a6a00"/><rect x="1" y="5" width="1" height="1" fill="#6a6a00"/><rect x="2" y="5" width="1" height="1" fill="#ffff30"/><rect x="3" y="5" width="1" height="1" fill="#d02800"/><rect x="4" y="5" width="1" height="1" fill="#ffff30"/><rect x="5" y="5" width="1" height="1" fill="#ffff30"/><rect x="6" y="5" width="1" height="1" fill="#6a6a00"/><rect x="7" y="5" width="1" height="1" fill="#6a6a00"/><rect x="0" y="6" width="1" height="1" fill="#6a6a00"/><rect x="1" y="6" width="1" height="1" fill="#ffff30"/><rect x="2" y="6" width="1" height="1" fill="#ffff30"/><rect x="3" y="6" width="1" height="1" fill="#ffff30"/><rect x="4" y="6" width="1" height="1" fill="#6a6a00"/><rect x="5" y="6" width="1" height="1" fill="#6a6a00"/><rect x="0" y="7" width="1" height="1" fill="#6a6a00"/><rect x="1" y="7" width="1" height="1" fill="#ffff30"/><rect x="2" y="7" width="1" height="1" fill="#ffff30"/><rect x="3" y="7" width="1" height="1" fill="#6a6a00"/><rect x="0" y="8" width="1" height="1" fill="#6a6a00"/><rect x="1" y="8" width="1" height="1" fill="#ffff30"/><rect x="2" y="8" width="1" height="1" fill="#6a6a00"/><rect x="0" y="9" width="1" height="1" fill="#6a6a00"/><rect x="1" y="9" width="1" height="1" fill="#6a6a00"/><rect x="2" y="9" width="1" height="1" fill="#6a6a00"/></svg>
<div style="left:330px;top:101px;width:1px;height:1px;background:#808080"></div>
<svg class="a" style="left:317px;top:108px" width="9" height="10" viewBox="0 0 9 10" shape-rendering="crispEdges"><rect x="4" y="0" width="1" height="1" fill="#6a6a00"/><rect x="5" y="0" width="1" height="1" fill="#6a6a00"/><rect x="6" y="0" width="1" height="1" fill="#6a6a00"/><rect x="7" y="0" width="1" height="1" fill="#6a6a00"/><rect x="3" y="1" width="1" height="1" fill="#6a6a00"/><rect x="4" y="1" width="1" height="1" fill="#ffff30"/><rect x="5" y="1" width="1" height="1" fill="#ffff30"/><rect x="6" y="1" width="1" height="1" fill="#ffff30"/><rect x="7" y="1" width="1" height="1" fill="#6a6a00"/><rect x="2" y="2" width="1" height="1" fill="#6a6a00"/><rect x="3" y="2" width="1" height="1" fill="#ffff30"/><rect x="4" y="2" width="1" height="1" fill="#ffff30"/><rect x="5" y="2" width="1" height="1" fill="#ffff30"/><rect x="6" y="2" width="1" height="1" fill="#ffff30"/><rect x="7" y="2" width="1" height="1" fill="#6a6a00"/><rect x="2" y="3" width="1" height="1" fill="#6a6a00"/><rect x="3" y="3" width="1" height="1" fill="#ffff30"/><rect x="4" y="3" width="1" height="1" fill="#d02800"/><rect x="5" y="3" width="1" height="1" fill="#d02800"/><rect x="6" y="3" width="1" height="1" fill="#ffff30"/><rect x="7" y="3" width="1" height="1" fill="#6a6a00"/><rect x="1" y="4" width="1" height="1" fill="#6a6a00"/><rect x="2" y="4" width="1" height="1" fill="#ffff30"/><rect x="3" y="4" width="1" height="1" fill="#d02800"/><rect x="4" y="4" width="1" height="1" fill="#d02800"/><rect x="5" y="4" width="1" height="1" fill="#ffff30"/><rect x="6" y="4" width="1" height="1" fill="#ffff30"/><rect x="7" y="4" width="1" height="1" fill="#6a6a00"/><rect x="1" y="5" width="1" height="1" fill="#6a6a00"/><rect x="2" y="5" width="1" height="1" fill="#ffff30"/><rect x="3" y="5" width="1" height="1" fill="#d02800"/><rect x="4" y="5" width="1" height="1" fill="#ffff30"/><rect x="5" y="5" width="1" height="1" fill="#ffff30"/><rect x="6" y="5" width="1" height="1" fill="#6a6a00"/><rect x="7" y="5" width="1" height="1" fill="#6a6a00"/><rect x="0" y="6" width="1" height="1" fill="#6a6a00"/><rect x="1" y="6" width="1" height="1" fill="#ffff30"/><rect x="2" y="6" width="1" height="1" fill="#ffff30"/><rect x="3" y="6" width="1" height="1" fill="#ffff30"/><rect x="4" y="6" width="1" height="1" fill="#6a6a00"/><rect x="5" y="6" width="1" height="1" fill="#6a6a00"/><rect x="0" y="7" width="1" height="1" fill="#6a6a00"/><rect x="1" y="7" width="1" height="1" fill="#ffff30"/><rect x="2" y="7" width="1" height="1" fill="#ffff30"/><rect x="3" y="7" width="1" height="1" fill="#6a6a00"/><rect x="0" y="8" width="1" height="1" fill="#6a6a00"/><rect x="1" y="8" width="1" height="1" fill="#ffff30"/><rect x="2" y="8" width="1" height="1" fill="#6a6a00"/><rect x="0" y="9" width="1" height="1" fill="#6a6a00"/><rect x="1" y="9" width="1" height="1" fill="#6a6a00"/><rect x="2" y="9" width="1" height="1" fill="#6a6a00"/></svg>
<div style="left:330px;top:119px;width:1px;height:1px;background:#808080"></div>
<svg class="a" style="left:317px;top:126px" width="9" height="10" viewBox="0 0 9 10" shape-rendering="crispEdges"><rect x="4" y="0" width="1" height="1" fill="#6a6a00"/><rect x="5" y="0" width="1" height="1" fill="#6a6a00"/><rect x="6" y="0" width="1" height="1" fill="#6a6a00"/><rect x="7" y="0" width="1" height="1" fill="#6a6a00"/><rect x="3" y="1" width="1" height="1" fill="#6a6a00"/><rect x="4" y="1" width="1" height="1" fill="#ffff30"/><rect x="5" y="1" width="1" height="1" fill="#ffff30"/><rect x="6" y="1" width="1" height="1" fill="#ffff30"/><rect x="7" y="1" width="1" height="1" fill="#6a6a00"/><rect x="2" y="2" width="1" height="1" fill="#6a6a00"/><rect x="3" y="2" width="1" height="1" fill="#ffff30"/><rect x="4" y="2" width="1" height="1" fill="#ffff30"/><rect x="5" y="2" width="1" height="1" fill="#ffff30"/><rect x="6" y="2" width="1" height="1" fill="#ffff30"/><rect x="7" y="2" width="1" height="1" fill="#6a6a00"/><rect x="2" y="3" width="1" height="1" fill="#6a6a00"/><rect x="3" y="3" width="1" height="1" fill="#ffff30"/><rect x="4" y="3" width="1" height="1" fill="#d02800"/><rect x="5" y="3" width="1" height="1" fill="#d02800"/><rect x="6" y="3" width="1" height="1" fill="#ffff30"/><rect x="7" y="3" width="1" height="1" fill="#6a6a00"/><rect x="1" y="4" width="1" height="1" fill="#6a6a00"/><rect x="2" y="4" width="1" height="1" fill="#ffff30"/><rect x="3" y="4" width="1" height="1" fill="#d02800"/><rect x="4" y="4" width="1" height="1" fill="#d02800"/><rect x="5" y="4" width="1" height="1" fill="#ffff30"/><rect x="6" y="4" width="1" height="1" fill="#ffff30"/><rect x="7" y="4" width="1" height="1" fill="#6a6a00"/><rect x="1" y="5" width="1" height="1" fill="#6a6a00"/><rect x="2" y="5" width="1" height="1" fill="#ffff30"/><rect x="3" y="5" width="1" height="1" fill="#d02800"/><rect x="4" y="5" width="1" height="1" fill="#ffff30"/><rect x="5" y="5" width="1" height="1" fill="#ffff30"/><rect x="6" y="5" width="1" height="1" fill="#6a6a00"/><rect x="7" y="5" width="1" height="1" fill="#6a6a00"/><rect x="0" y="6" width="1" height="1" fill="#6a6a00"/><rect x="1" y="6" width="1" height="1" fill="#ffff30"/><rect x="2" y="6" width="1" height="1" fill="#ffff30"/><rect x="3" y="6" width="1" height="1" fill="#ffff30"/><rect x="4" y="6" width="1" height="1" fill="#6a6a00"/><rect x="5" y="6" width="1" height="1" fill="#6a6a00"/><rect x="0" y="7" width="1" height="1" fill="#6a6a00"/><rect x="1" y="7" width="1" height="1" fill="#ffff30"/><rect x="2" y="7" width="1" height="1" fill="#ffff30"/><rect x="3" y="7" width="1" height="1" fill="#6a6a00"/><rect x="0" y="8" width="1" height="1" fill="#6a6a00"/><rect x="1" y="8" width="1" height="1" fill="#ffff30"/><rect x="2" y="8" width="1" height="1" fill="#6a6a00"/><rect x="0" y="9" width="1" height="1" fill="#6a6a00"/><rect x="1" y="9" width="1" height="1" fill="#6a6a00"/><rect x="2" y="9" width="1" height="1" fill="#6a6a00"/></svg>
<div style="left:330px;top:137px;width:1px;height:1px;background:#808080"></div>
<svg class="a" style="left:317px;top:144px" width="9" height="10" viewBox="0 0 9 10" shape-rendering="crispEdges"><rect x="4" y="0" width="1" height="1" fill="#6a6a00"/><rect x="5" y="0" width="1" height="1" fill="#6a6a00"/><rect x="6" y="0" width="1" height="1" fill="#6a6a00"/><rect x="7" y="0" width="1" height="1" fill="#6a6a00"/><rect x="3" y="1" width="1" height="1" fill="#6a6a00"/><rect x="4" y="1" width="1" height="1" fill="#ffff30"/><rect x="5" y="1" width="1" height="1" fill="#ffff30"/><rect x="6" y="1" width="1" height="1" fill="#ffff30"/><rect x="7" y="1" width="1" height="1" fill="#6a6a00"/><rect x="2" y="2" width="1" height="1" fill="#6a6a00"/><rect x="3" y="2" width="1" height="1" fill="#ffff30"/><rect x="4" y="2" width="1" height="1" fill="#ffff30"/><rect x="5" y="2" width="1" height="1" fill="#ffff30"/><rect x="6" y="2" width="1" height="1" fill="#ffff30"/><rect x="7" y="2" width="1" height="1" fill="#6a6a00"/><rect x="2" y="3" width="1" height="1" fill="#6a6a00"/><rect x="3" y="3" width="1" height="1" fill="#ffff30"/><rect x="4" y="3" width="1" height="1" fill="#d02800"/><rect x="5" y="3" width="1" height="1" fill="#d02800"/><rect x="6" y="3" width="1" height="1" fill="#ffff30"/><rect x="7" y="3" width="1" height="1" fill="#6a6a00"/><rect x="1" y="4" width="1" height="1" fill="#6a6a00"/><rect x="2" y="4" width="1" height="1" fill="#ffff30"/><rect x="3" y="4" width="1" height="1" fill="#d02800"/><rect x="4" y="4" width="1" height="1" fill="#d02800"/><rect x="5" y="4" width="1" height="1" fill="#ffff30"/><rect x="6" y="4" width="1" height="1" fill="#ffff30"/><rect x="7" y="4" width="1" height="1" fill="#6a6a00"/><rect x="1" y="5" width="1" height="1" fill="#6a6a00"/><rect x="2" y="5" width="1" height="1" fill="#ffff30"/><rect x="3" y="5" width="1" height="1" fill="#d02800"/><rect x="4" y="5" width="1" height="1" fill="#ffff30"/><rect x="5" y="5" width="1" height="1" fill="#ffff30"/><rect x="6" y="5" width="1" height="1" fill="#6a6a00"/><rect x="7" y="5" width="1" height="1" fill="#6a6a00"/><rect x="0" y="6" width="1" height="1" fill="#6a6a00"/><rect x="1" y="6" width="1" height="1" fill="#ffff30"/><rect x="2" y="6" width="1" height="1" fill="#ffff30"/><rect x="3" y="6" width="1" height="1" fill="#ffff30"/><rect x="4" y="6" width="1" height="1" fill="#6a6a00"/><rect x="5" y="6" width="1" height="1" fill="#6a6a00"/><rect x="0" y="7" width="1" height="1" fill="#6a6a00"/><rect x="1" y="7" width="1" height="1" fill="#ffff30"/><rect x="2" y="7" width="1" height="1" fill="#ffff30"/><rect x="3" y="7" width="1" height="1" fill="#6a6a00"/><rect x="0" y="8" width="1" height="1" fill="#6a6a00"/><rect x="1" y="8" width="1" height="1" fill="#ffff30"/><rect x="2" y="8" width="1" height="1" fill="#6a6a00"/><rect x="0" y="9" width="1" height="1" fill="#6a6a00"/><rect x="1" y="9" width="1" height="1" fill="#6a6a00"/><rect x="2" y="9" width="1" height="1" fill="#6a6a00"/></svg>
<div style="left:330px;top:155px;width:1px;height:1px;background:#808080"></div>
<div style="left:334px;top:86px;width:35px;height:17px;background:#cce8ff"></div>
<div class="t" style="left:336px;top:87.84px;font-size:12px;line-height:12px;color:#000">Alpha</div>
<div class="t" style="left:336px;top:105.84px;font-size:12px;line-height:12px;color:#000">Beta</div>
<div class="t" style="left:336px;top:123.84px;font-size:12px;line-height:12px;color:#000">Gamma</div>
<div class="t" style="left:336px;top:141.84px;font-size:12px;line-height:12px;color:#000">Kappa</div>
<div style="left:797px;top:85px;width:180px;height:17px;background:#f0f0f0;box-shadow:inset -1px -1px #696969,inset 1px 1px #e3e3e3,inset -2px -2px #a0a0a0,inset 2px 2px #fff;"></div>
<div class="t" style="left:797px;top:87.69px;font-size:11px;line-height:11px;width:180px;text-align:center;">Add file(s)</div>
<div style="left:797px;top:102px;width:180px;height:17px;background:#f0f0f0;box-shadow:inset -1px -1px #696969,inset 1px 1px #e3e3e3,inset -2px -2px #a0a0a0,inset 2px 2px #fff;"></div>
<div class="t" style="left:797px;top:104.69px;font-size:11px;line-height:11px;width:180px;text-align:center;">Add project file(s)</div>
<div style="left:797px;top:119px;width:180px;height:17px;background:#f0f0f0;box-shadow:inset -1px -1px #696969,inset 1px 1px #e3e3e3,inset -2px -2px #a0a0a0,inset 2px 2px #fff;"></div>
<div class="t" style="left:797px;top:121.69px;font-size:11px;line-height:11px;width:180px;text-align:center;">Add dummy</div>
<div style="left:797px;top:153px;width:180px;height:17px;background:#f0f0f0;box-shadow:inset -1px -1px #696969,inset 1px 1px #e3e3e3,inset -2px -2px #a0a0a0,inset 2px 2px #fff;"></div>
<div class="t" style="left:797px;top:155.69px;font-size:11px;line-height:11px;width:180px;text-align:center;">Load from XL</div>
<div style="left:797px;top:238px;width:72px;height:17px;background:#f0f0f0;box-shadow:inset -1px -1px #696969,inset 1px 1px #e3e3e3,inset -2px -2px #a0a0a0,inset 2px 2px #fff;"></div>
<div class="t" style="left:797px;top:240.69px;font-size:11px;line-height:11px;width:72px;text-align:center;">Up</div>
<div style="left:797px;top:255px;width:72px;height:17px;background:#f0f0f0;box-shadow:inset -1px -1px #696969,inset 1px 1px #e3e3e3,inset -2px -2px #a0a0a0,inset 2px 2px #fff;"></div>
<div class="t" style="left:797px;top:257.69px;font-size:11px;line-height:11px;width:72px;text-align:center;">Down</div>
<div style="left:797px;top:289px;width:72px;height:17px;background:#f0f0f0;box-shadow:inset -1px -1px #696969,inset 1px 1px #e3e3e3,inset -2px -2px #a0a0a0,inset 2px 2px #fff;"></div>
<div class="t" style="left:797px;top:291.69px;font-size:11px;line-height:11px;width:72px;text-align:center;">Delete</div>
<div class="t" style="left:891px;top:240.69px;font-size:11px;line-height:11px;">Show</div>
<svg class="a" style="left:935px;top:239px" width="14" height="13"><rect x="0" y="0" width="14" height="13" fill="#c4c4c4"/><circle cx="6.5" cy="6.5" r="5.6" fill="#fff"/><path d="M2.54 10.46A5.6 5.6 0 0 1 10.46 2.54" fill="none" stroke="#000" stroke-width="1.4"/><path d="M10.46 2.54A5.6 5.6 0 0 1 2.54 10.46" fill="none" stroke="#8a8a8a" stroke-width="1.1"/><rect x="5" y="6" width="3" height="1" fill="#000"/><rect x="6" y="5" width="1" height="3" fill="#000"/><rect x="5.5" y="5.5" width="2" height="2" fill="#000"/></svg>
<svg class="a" style="left:935px;top:256px" width="14" height="13"><rect x="0" y="0" width="14" height="13" fill="#c4c4c4"/><circle cx="6.5" cy="6.5" r="5.6" fill="#fff"/><path d="M2.54 10.46A5.6 5.6 0 0 1 10.46 2.54" fill="none" stroke="#000" stroke-width="1.4"/><path d="M10.46 2.54A5.6 5.6 0 0 1 2.54 10.46" fill="none" stroke="#8a8a8a" stroke-width="1.1"/></svg>
<svg class="a" style="left:935px;top:273px" width="14" height="13"><rect x="0" y="0" width="14" height="13" fill="#c4c4c4"/><circle cx="6.5" cy="6.5" r="5.6" fill="#fff"/><path d="M2.54 10.46A5.6 5.6 0 0 1 10.46 2.54" fill="none" stroke="#000" stroke-width="1.4"/><path d="M10.46 2.54A5.6 5.6 0 0 1 2.54 10.46" fill="none" stroke="#8a8a8a" stroke-width="1.1"/></svg>
<div class="t" style="left:950px;top:239.69px;font-size:11px;line-height:11px;letter-spacing:-0.3px">Name</div>
<div class="t" style="left:950px;top:256.69px;font-size:11px;line-height:11px;letter-spacing:-0.3px">File</div>
<div class="t" style="left:950px;top:273.69px;font-size:11px;line-height:11px;letter-spacing:-0.3px">Name/file</div>
<div class="t" style="left:297px;top:364.69px;font-size:11px;line-height:11px;">Name:</div>
<div class="t" style="left:297px;top:383.69px;font-size:11px;line-height:11px;">Folder:</div>
<div class="t" style="left:297px;top:402.69px;font-size:11px;line-height:11px;">Filename:</div>
<div class="t" style="left:297px;top:421.69px;font-size:11px;line-height:11px;">Resource :</div>
<div style="left:365px;top:361px;width:413px;height:19px;background:#fff;box-shadow:inset 1px 1px #000,inset -1px -1px #fff;"></div>
<div class="t" style="left:370px;top:364.69px;font-size:11px;line-height:11px;letter-spacing:-0.12px;">Alpha</div>
<div style="left:365px;top:380px;width:413px;height:19px;background:#fff;box-shadow:inset 1px 1px #000,inset -1px -1px #fff;"></div>
<div class="t" style="left:370px;top:383.69px;font-size:11px;line-height:11px;letter-spacing:-0.12px;">C:\Rep data\Course\Pre-post</div>
<div style="left:365px;top:399px;width:413px;height:19px;background:#fff;box-shadow:inset 1px 1px #000,inset -1px -1px #fff;"></div>
<div class="t" style="left:370px;top:402.69px;font-size:11px;line-height:11px;letter-spacing:-0.12px;">gas 1.ppr</div>
<div style="left:365px;top:418px;width:413px;height:19px;background:#f0f0f0;box-shadow:inset 1px 1px #000,inset -1px -1px #fff;"></div>
<div style="left:797px;top:361px;width:72px;height:19px;background:#f0f0f0;box-shadow:inset -1px -1px #696969,inset 1px 1px #e3e3e3,inset -2px -2px #a0a0a0,inset 2px 2px #fff;"></div>
<div class="t" style="left:797px;top:364.69px;font-size:11px;line-height:11px;width:72px;text-align:center;">View</div>
<div style="left:797px;top:380px;width:72px;height:19px;background:#f0f0f0;box-shadow:inset -1px -1px #696969,inset 1px 1px #e3e3e3,inset -2px -2px #a0a0a0,inset 2px 2px #fff;"></div>
<div class="t" style="left:797px;top:383.69px;font-size:11px;line-height:11px;width:72px;text-align:center;">Load all</div>
<div style="left:365px;top:456px;width:242px;height:75px;background:#cccccc;box-shadow:inset 1px 1px #808080,inset -1px -1px #fff;"></div>
<div style="left:366px;top:457px;width:240px;height:1px;background:#696969"></div>
<div style="left:366px;top:457px;width:1px;height:73px;background:#696969"></div>
<div style="left:367px;top:458px;width:18px;height:15px;background:#f0f0f0;box-shadow:inset -1px -1px #000,inset 1px 1px #fff;"></div>
<div style="left:385px;top:458px;width:57px;height:15px;background:#f0f0f0;box-shadow:inset -1px -1px #000,inset 1px 1px #fff;"></div>
<div style="left:442px;top:458px;width:73px;height:15px;background:#f0f0f0;box-shadow:inset -1px -1px #000,inset 1px 1px #fff;"></div>
<div style="left:515px;top:458px;width:73px;height:15px;background:#f0f0f0;box-shadow:inset -1px -1px #000,inset 1px 1px #fff;"></div>
<div style="left:367px;top:473px;width:18px;height:17px;background:#f0f0f0;box-shadow:inset -1px -1px #000,inset 1px 1px #fff;"></div>
<div style="left:385px;top:473px;width:57px;height:17px;background:#f0f0f0;box-shadow:inset -1px -1px #808080;"></div>
<div style="left:442px;top:473px;width:73px;height:17px;background:#f0f0f0;box-shadow:inset -1px -1px #808080;"></div>
<div style="left:515px;top:473px;width:73px;height:17px;background:#f0f0f0;box-shadow:inset -1px -1px #808080;"></div>
<div style="left:367px;top:490px;width:18px;height:17px;background:#f0f0f0;box-shadow:inset -1px -1px #000,inset 1px 1px #fff;"></div>
<div style="left:385px;top:490px;width:57px;height:17px;background:#f0f0f0;box-shadow:inset -1px -1px #808080;"></div>
<div style="left:442px;top:490px;width:73px;height:17px;background:#f0f0f0;box-shadow:inset -1px -1px #808080;"></div>
<div style="left:515px;top:490px;width:73px;height:17px;background:#f0f0f0;box-shadow:inset -1px -1px #808080;"></div>
<div class="t" style="left:446px;top:459.69px;font-size:11px;line-height:11px;letter-spacing:-0.3px">Mean</div>
<div class="t" style="left:519px;top:459.69px;font-size:11px;line-height:11px;letter-spacing:-0.3px">Chance</div>
<svg class="a" style="left:368px;top:572px" width="14" height="13"><rect x="0" y="0" width="14" height="13" fill="#c4c4c4"/><circle cx="6.5" cy="6.5" r="5.6" fill="#fff"/><path d="M2.54 10.46A5.6 5.6 0 0 1 10.46 2.54" fill="none" stroke="#000" stroke-width="1.4"/><path d="M10.46 2.54A5.6 5.6 0 0 1 2.54 10.46" fill="none" stroke="#8a8a8a" stroke-width="1.1"/></svg>
<svg class="a" style="left:494px;top:572px" width="14" height="13"><rect x="0" y="0" width="14" height="13" fill="#c4c4c4"/><circle cx="6.5" cy="6.5" r="5.6" fill="#fff"/><path d="M2.54 10.46A5.6 5.6 0 0 1 10.46 2.54" fill="none" stroke="#000" stroke-width="1.4"/><path d="M10.46 2.54A5.6 5.6 0 0 1 2.54 10.46" fill="none" stroke="#8a8a8a" stroke-width="1.1"/></svg>
<div class="t" style="left:383px;top:572.69px;font-size:11px;line-height:11px;letter-spacing:-0.2px;">Whole trap</div>
<div class="t" style="left:509px;top:572.69px;font-size:11px;line-height:11px;letter-spacing:-0.2px;">Company share</div>
<div style="left:31px;top:648px;width:156px;height:20px;background:#f0f0f0;box-shadow:inset -1px -1px #696969,inset 1px 1px #e3e3e3,inset -2px -2px #a0a0a0,inset 2px 2px #fff;"></div>
<div class="t" style="left:31px;top:651.69px;font-size:11px;line-height:11px;width:156px;text-align:center;">Help</div>
<div style="left:29px;top:674px;width:109px;height:17px;background:#e6e6e6;box-shadow:inset 1px 1px #b8b8b8,inset -1px 0 #b8b8b8;"></div>
<div style="left:1047px;top:673px;width:1px;height:18px;background:#d0d0d0;"></div>
<div style="left:1063px;top:681px;width:2px;height:2px;background:#a0a0a0;"></div>
<div style="left:1060px;top:684px;width:2px;height:2px;background:#a0a0a0;"></div>
<div style="left:1063px;top:684px;width:2px;height:2px;background:#a0a0a0;"></div>
<div style="left:1057px;top:687px;width:2px;height:2px;background:#a0a0a0;"></div>
<div style="left:1060px;top:687px;width:2px;height:2px;background:#a0a0a0;"></div>
<div style="left:1063px;top:687px;width:2px;height:2px;background:#a0a0a0;"></div>
</body></html>
